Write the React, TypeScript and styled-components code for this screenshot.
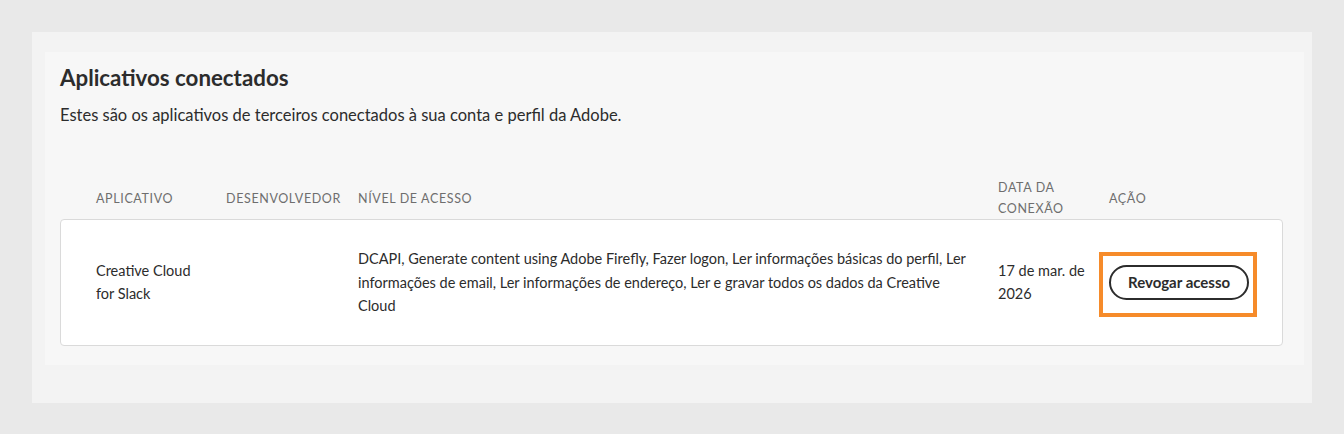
import styled, { createGlobalStyle } from "styled-components";

const GlobalStyle = createGlobalStyle`
  body {
    margin: 0;
    background: #e9e9e9;
    font-family: Lato, "Open Sans", sans-serif;
    color: #2c2c2c;
  }
`;

const COLUMNS = "130px 132px 640px 111px 1fr";

function App() {
  return (
    <>
      <GlobalStyle />
      <Page>
        <Outer>
          <Inner>
            <Title>Aplicativos conectados</Title>
            <Subtitle>
              Estes são os aplicativos de terceiros conectados à sua conta e
              perfil da Adobe.
            </Subtitle>

            <HeaderRow>
              <HeadCell>Aplicativo</HeadCell>
              <HeadCell>Desenvolvedor</HeadCell>
              <HeadCell>Nível de acesso</HeadCell>
              <HeadCell>Data da conexão</HeadCell>
              <HeadCell>Ação</HeadCell>
            </HeaderRow>

            <Card>
              <Cell>Creative Cloud for Slack</Cell>
              <Cell></Cell>
              <Cell className="access">
                DCAPI, Generate content using Adobe Firefly, Fazer logon, Ler
                informações básicas do perfil, Ler informações de email, Ler
                informações de endereço, Ler e gravar todos os dados da
                Creative Cloud
              </Cell>
              <Cell>17 de mar. de 2026</Cell>
              <Cell>
                <Focus>
                  <Button>Revogar acesso</Button>
                </Focus>
              </Cell>
            </Card>
          </Inner>
        </Outer>
      </Page>
    </>
  );
}

export default App;

const Page = styled.div`
  padding: 32px;
  width: 1344px;
  box-sizing: border-box;
`;

const Outer = styled.div`
  background: #f3f3f3;
  padding: 20px 8px 38px 13px;
`;

const Inner = styled.div`
  background: #f7f7f7;
  padding: 12px 21px 19px 15px;
`;

const Title = styled.h2`
  margin: 0;
  font-size: 22.3px;
  font-weight: 700;
  line-height: 28px;
  color: #2c2c2c;
`;

const Subtitle = styled.p`
  margin: 12px 0 0;
  font-size: 16.5px;
  line-height: 22px;
`;

const HeaderRow = styled.div`
  display: grid;
  grid-template-columns: ${COLUMNS};
  align-items: center;
  padding: 0 0 0 36px;
  margin-top: 49px;
`;

const HeadCell = styled.div`
  font-size: 12.5px;
  letter-spacing: 0.05em;
  text-transform: uppercase;
  color: #6e6e6e;
  line-height: 21px;
  padding: 2px 24px 0 0;
`;

const Card = styled.div`
  display: grid;
  grid-template-columns: ${COLUMNS};
  align-items: center;
  background: #fff;
  border: 1px solid #dadada;
  border-radius: 4px;
  padding: 27px 0 27px 35px;
`;

const Cell = styled.div`
  font-size: 14.5px;
  line-height: 23.5px;
  padding-right: 24px;

  &.access {
    padding-right: 18px;
  }
`;

const Focus = styled.div`
  display: inline-block;
  margin: 4px 0 0 -10px;
  padding: 9px 4px 13px 6px;
  border: 4px solid #f68b2a;
`;

const Button = styled.button`
  display: block;
  height: 35px;
  padding: 0 17px;
  border: 2px solid #2c2c2c;
  border-radius: 18px;
  background: #fff;
  color: #2c2c2c;
  font-family: Lato, "Open Sans", sans-serif;
  font-size: 15px;
  font-weight: 700;
  white-space: nowrap;
`;
